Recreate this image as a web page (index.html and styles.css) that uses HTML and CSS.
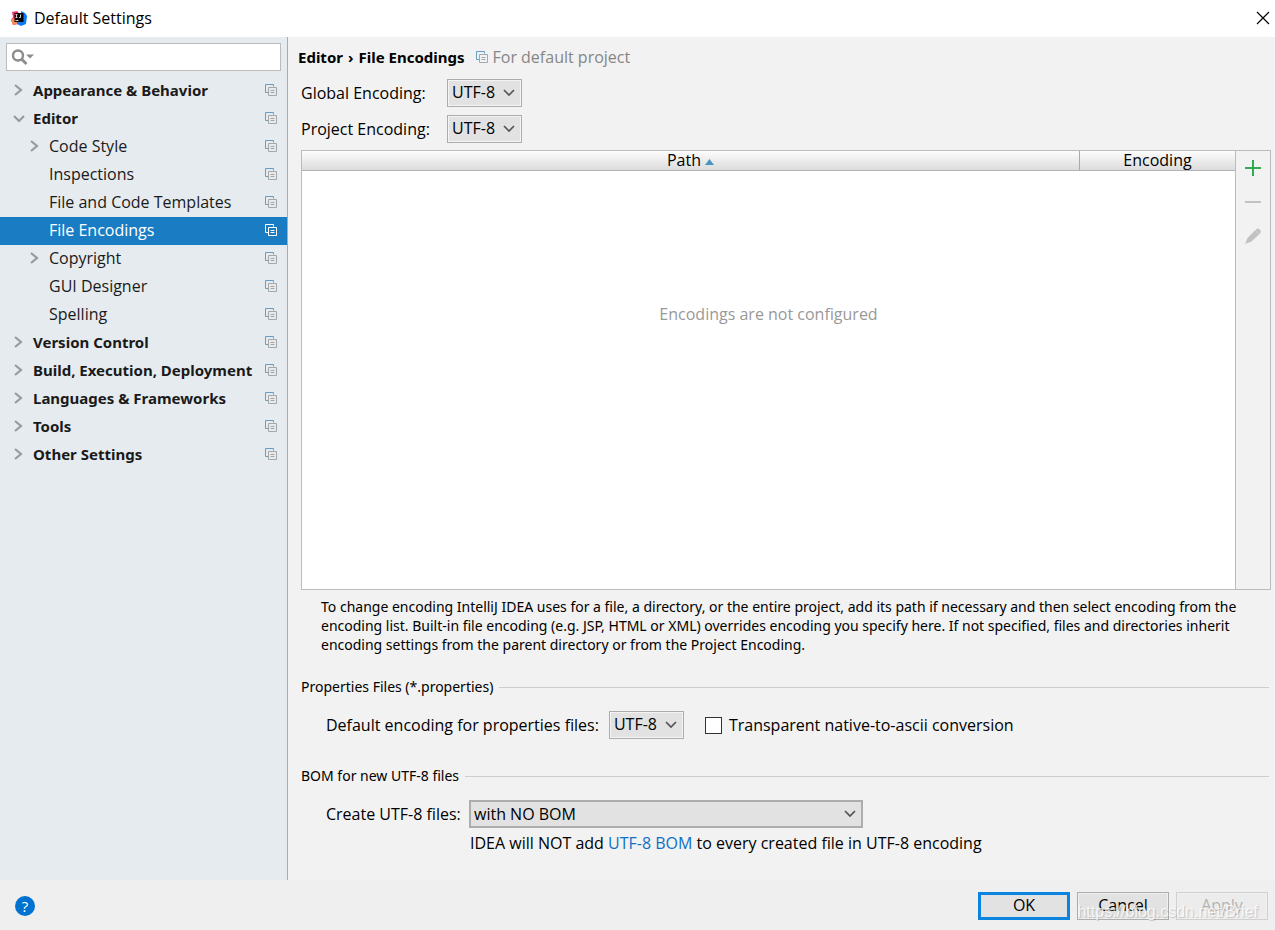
FILE: index.html
```html
<!DOCTYPE html>
<html lang="en">
<head>
<meta charset="utf-8">
<title>Default Settings</title>
<link rel="stylesheet" href="styles.css">
</head>
<body>
<svg class="defs" aria-hidden="true">
  <symbol id="copy" viewBox="0 0 13 13">
    <path d="M3.500 8.500h-3v-8h8v2" fill="none" stroke="var(--back)"/>
    <path d="M3.500 3.500h8v8h-8z" fill="none" stroke="var(--front)"/>
    <path d="M5.500 6.500h4M5.500 8.500h4" stroke="var(--front)"/>
  </symbol>
  <symbol id="right" viewBox="0 0 12 12"><path d="M2 1l6 5-6 5" fill="none" stroke="#989a9c" stroke-width="2.200"/></symbol>
  <symbol id="down" viewBox="0 0 12 12"><path d="M1 4l5 5 5-5" fill="none" stroke="#989a9c" stroke-width="2.200"/></symbol>
  <symbol id="chevron" viewBox="0 0 12 8"><path d="M1 1l5 5 5-5" fill="none" stroke="#555" stroke-width="1.700"/></symbol>
</svg>
<div class="dialog">
  <header class="titlebar">
    <svg class="logo" viewBox="0 0 16 16" aria-hidden="true">
      <path d="M1 2l5-1 6 7-5 6-5 1-2-5 2-3z" fill="#f8316b"/>
      <path d="M0 10l3-2 4 6-5 1z" fill="#f78a52"/>
      <path d="M10 1l4 2 2 3-1 8-5 2-4-2 4-6z" fill="#087cfa"/>
      <path d="M3.500 3h9v9h-9z" fill="#0a0508"/>
      <path d="M4.500 4.500h2M5.500 4.500v3M4.500 7.500h2M9.500 4.500v3H8M4.500 10.500h3" fill="none" stroke="#ccc"/>
    </svg>
    <h1 class="title">Default Settings</h1>
    <button class="close" aria-label="Close"><svg viewBox="0 0 12 12"><path d="M0 0l12 12M12 0L0 12" stroke="#000" stroke-width="1.200"/></svg></button>
  </header>
  <div class="body">
    <nav class="sidebar" aria-label="Settings">
      <label class="search">
        <svg viewBox="0 0 24 18" aria-hidden="true"><circle cx="7" cy="7.500" r="5" fill="none" stroke="#8c8c8c" stroke-width="2.400"/><path d="M10.500 11l5 5" stroke="#8c8c8c" stroke-width="2.800"/><path d="M15 6.500h8l-4 4z" fill="#8c8c8c"/></svg>
        <input type="text" aria-label="Search settings">
      </label>
      <ul class="tree">
        <li><button class="row group"><svg class="arrow"><use href="#right"/></svg><span>Appearance &amp; Behavior</span><svg class="copy"><use href="#copy"/></svg></button></li>
        <li><button class="row group" aria-expanded="true"><svg class="arrow"><use href="#down"/></svg><span>Editor</span><svg class="copy"><use href="#copy"/></svg></button>
          <ul class="branch">
            <li><button class="row"><svg class="arrow"><use href="#right"/></svg><span>Code Style</span><svg class="copy"><use href="#copy"/></svg></button></li>
            <li><button class="row"><i class="arrow"></i><span>Inspections</span><svg class="copy"><use href="#copy"/></svg></button></li>
            <li><button class="row"><i class="arrow"></i><span>File and Code Templates</span><svg class="copy"><use href="#copy"/></svg></button></li>
            <li><button class="row selected" aria-current="page"><i class="arrow"></i><span>File Encodings</span><svg class="copy"><use href="#copy"/></svg></button></li>
            <li><button class="row"><svg class="arrow"><use href="#right"/></svg><span>Copyright</span><svg class="copy"><use href="#copy"/></svg></button></li>
            <li><button class="row"><i class="arrow"></i><span>GUI Designer</span><svg class="copy"><use href="#copy"/></svg></button></li>
            <li><button class="row"><i class="arrow"></i><span>Spelling</span><svg class="copy"><use href="#copy"/></svg></button></li>
          </ul>
        </li>
        <li><button class="row group"><svg class="arrow"><use href="#right"/></svg><span>Version Control</span><svg class="copy"><use href="#copy"/></svg></button></li>
        <li><button class="row group"><svg class="arrow"><use href="#right"/></svg><span>Build, Execution, Deployment</span><svg class="copy"><use href="#copy"/></svg></button></li>
        <li><button class="row group"><svg class="arrow"><use href="#right"/></svg><span>Languages &amp; Frameworks</span><svg class="copy"><use href="#copy"/></svg></button></li>
        <li><button class="row group"><svg class="arrow"><use href="#right"/></svg><span>Tools</span><svg class="copy"><use href="#copy"/></svg></button></li>
        <li><button class="row group"><svg class="arrow"><use href="#right"/></svg><span>Other Settings</span><svg class="copy"><use href="#copy"/></svg></button></li>
      </ul>
    </nav>
    <main class="main">
      <div class="crumbs">
        <h2 class="crumb"><span>Editor</span><span>›</span><span>File Encodings</span></h2>
        <svg class="copy"><use href="#copy"/></svg>
        <span class="scope">For default project</span>
      </div>
      <div class="fields">
        <label for="global">Global Encoding:</label>
        <span class="combo"><select id="global"><option>UTF-8</option></select><svg><use href="#chevron"/></svg></span>
        <label for="project">Project Encoding:</label>
        <span class="combo"><select id="project"><option>UTF-8</option></select><svg><use href="#chevron"/></svg></span>
      </div>
      <div class="panel">
        <table class="grid">
          <thead><tr><th>Path <svg class="sort" viewBox="0 0 9 6"><path d="M0 6l4.500-6L9 6z" fill="#4a94c4"/></svg></th><th class="enc">Encoding</th></tr></thead>
          <tbody><tr><td colspan="2">Encodings are not configured</td></tr></tbody>
        </table>
        <div class="tools">
          <button aria-label="Add"><svg viewBox="0 0 16 16"><path d="M8 0v16M0 8h16" stroke="#2fac4f" stroke-width="2"/></svg></button>
          <button aria-label="Remove" disabled><svg viewBox="0 0 16 16"><path d="M0 8h16" stroke="#c2c2c2" stroke-width="2"/></svg></button>
          <button aria-label="Edit" disabled><svg viewBox="0 0 16 16"><path d="M0 16l2.500-6L11 1.500q1.500-1.500 3-.5l1.500 1.500q.8 1.500-.5 3L6.500 13.500z" fill="#c2c2c2"/><path d="M10.500 2.500l3.500 4" stroke="#dedede" stroke-width=".7"/></svg></button>
        </div>
      </div>
      <p class="help">To change encoding IntelliJ IDEA uses for a file, a directory, or the entire project, add its path if necessary and then select encoding from the encoding list. Built-in file encoding (e.g. JSP, HTML or XML) overrides encoding you specify here. If not specified, files and directories inherit encoding settings from the parent directory or from the Project Encoding.</p>
      <h3 class="section">Properties Files (*.properties)</h3>
      <div class="line">
        <label for="props">Default encoding for properties files:</label>
        <span class="combo props"><select id="props"><option>UTF-8</option></select><svg><use href="#chevron"/></svg></span>
        <label class="check"><input type="checkbox">Transparent native-to-ascii conversion</label>
      </div>
      <h3 class="section bom">BOM for new UTF-8 files</h3>
      <div class="line create">
        <label for="create">Create UTF-8 files:</label>
        <span class="combo wide"><select id="create"><option>with NO BOM</option></select><svg><use href="#chevron"/></svg></span>
        <p class="note">IDEA will NOT add <a href="#bom">UTF-8 BOM</a> to every created file in UTF-8 encoding</p>
      </div>
    </main>
  </div>
  <footer class="footer">
    <button class="question" aria-label="Help">?</button>
    <button class="btn primary">OK</button>
    <button class="btn">Cancel</button>
    <button class="btn" disabled>Apply</button>
    <span class="watermark">https://blog.csdn.net/Brief</span>
  </footer>
</div>
</body>
</html>
```
FILE: styles.css
```css
* { box-sizing: border-box; }
body, h1, h2, h3, p, ul { margin: 0; padding: 0; }
ul { list-style: none; }
body, button, input, select { font-family: "Open Sans", "Noto Sans", sans-serif; font-size: 16px; line-height: 20px; color: #000; }
button { border: 0; padding: 0; background: none; }
svg { display: block; flex: none; }
.defs { display: none; }
.dialog { display: flex; flex-direction: column; min-height: 100vh; background: #f2f2f2; }

.titlebar { display: flex; align-items: center; height: 37px; padding: 0 6px 1px 11px; background: #fff; }
.logo { width: 16px; height: 16px; }
.title { flex: 1; padding-left: 7px; font-size: 16px; font-weight: 400; }
.close svg { width: 12px; height: 12px; overflow: visible; }

.body { display: flex; flex: 1; }
.sidebar { flex: none; width: 288px; padding-top: 6px; background: #e6ebef; border-right: 1px solid #a8acaf; }
.search { display: flex; align-items: center; height: 28px; margin: 0 6px 5px; padding-left: 4px; background: #fff; border: 1px solid #bcbcbc; }
.search svg { width: 24px; height: 18px; }
.search input { flex: 1; min-width: 0; border: 0; outline: 0; background: none; }
.tree { padding-top: 1px; }
.row { display: flex; align-items: center; width: 100%; height: 28px; padding: 0 9px 2px 13px; text-align: left; color: #1a1a1a; }
.row span { flex: 1; white-space: nowrap; }
.arrow { width: 12px; height: 12px; margin-right: 8px; }
.group { font-family: "Noto Sans", sans-serif; font-size: 15px; font-weight: 700; }
.branch .row { padding-left: 29px; }
.copy { width: 13px; height: 13px; --back: #62a0c8; --front: #a5a8aa; }
.selected { background: #1a7dc4; color: #fff; }
.selected .copy { --back: #fff; --front: #fff; }

.main { flex: 1; min-width: 0; padding: 9px 4px 16px 13px; }
.crumbs { display: flex; align-items: center; margin-left: -3px; height: 22px; }
.crumb { display: flex; gap: 5px; font-family: "Noto Sans", sans-serif; font-size: 15px; font-weight: 700; padding-right: 11px; }
.scope { padding-left: 4px; color: #868686; }
.fields { display: grid; grid-template-columns: 146px 75px; row-gap: 8px; align-items: center; margin: 11px 0 7px; }
.combo { display: grid; align-items: center; width: 75px; height: 28px; }
.combo > * { grid-area: 1 / 1; }
.combo select { appearance: none; width: 100%; height: 28px; padding: 0 4px 2px; background: #e2e2e2; border: 1px solid #adadad; box-shadow: inset 0 0 0 1px #f4f4f4; border-radius: 0; }
.combo svg { width: 12px; height: 8px; justify-self: end; margin-right: 7px; pointer-events: none; }

.panel { display: flex; height: 440px; border: 1px solid #bcbcbc; background: #fff; }
.grid { flex: 1; border-spacing: 0; table-layout: fixed; height: 100%; }
.grid th { height: 20px; padding: 0; font-weight: 400; line-height: 19px; background: linear-gradient(#fdfdfd, #dcdcdc); border-bottom: 1px solid #b4b4b4; }
.grid .enc { width: 156px; border-left: 1px solid #aaa; }
.sort { display: inline-block; width: 9px; height: 6px; vertical-align: 1px; }
.grid td { padding: 133px 0 0; vertical-align: top; text-align: center; color: #999; }
.tools { display: flex; flex-direction: column; align-items: center; gap: 18px; flex: none; width: 35px; padding-top: 9px; background: #f2f2f2; border-left: 1px solid #bcbcbc; }
.tools svg { width: 16px; height: 16px; }

.help { padding: 7px 0 0 20px; font-family: "Noto Sans", sans-serif; font-size: 14px; line-height: 19px; }
.section { display: flex; align-items: center; gap: 6px; margin-top: 23px; padding-right: 2px; font-family: "Noto Sans", sans-serif; font-size: 14px; font-weight: 400; line-height: 20px; }
.section::after { content: ""; flex: 1; height: 1px; background: #cdcdcd; }
.line { display: flex; align-items: center; margin-top: 14px; padding-left: 25px; }
.props { margin: 0 21px 0 10px; }
.check { display: flex; align-items: center; gap: 7px; }
.check input { appearance: none; width: 17px; height: 17px; margin: 0; background: #fff; border: 1px solid #333; }
.bom { margin-top: 27px; }
.create { display: grid; grid-template-columns: 143px 1fr; row-gap: 5px; }
.combo.wide { width: 394px; max-width: 100%; }
.wide select { border-width: 2px; box-shadow: none; padding: 0 3px; }
.note { grid-column: 2; padding-left: 1px; }
.note a { color: #0f6fc6; text-decoration: none; }

.footer { position: relative; display: flex; align-items: center; gap: 7px; height: 50px; padding: 2px 7px 0 15px; background: #efefef; }
.question { width: 20px; height: 20px; margin-right: auto; border-radius: 50%; background: #0072d0; color: #fff; font-size: 15px; }
.btn { width: 92px; height: 28px; padding-bottom: 2px; background: #e2e2e2; border: 1px solid #adadad; box-shadow: inset 0 0 0 1px #f0f0f0; }
.primary { border: 3px solid #0a84de; box-shadow: none; }
.btn:disabled { background: #ececec; border-color: #d0d0d0; color: #b4b4b4; }
.watermark { position: absolute; right: 17px; bottom: 8px; font-family: "Liberation Sans", sans-serif; font-size: 16px; line-height: 20px; color: rgba(255, 255, 255, .8); text-shadow: 1px 1px 1px rgba(120, 120, 120, .35); pointer-events: none; }
```
